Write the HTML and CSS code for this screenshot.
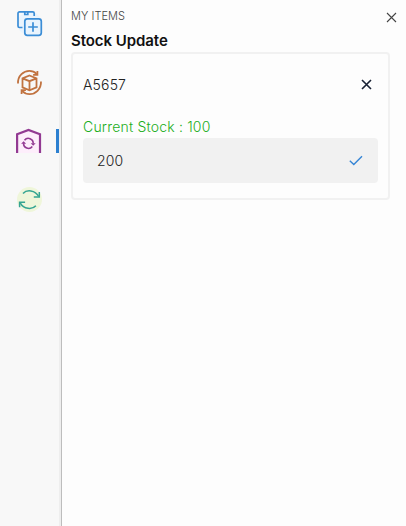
FILE: index.html
```html
<!DOCTYPE html>
<html lang="en">
<head>
<meta charset="utf-8">
<title>My Items</title>
<link rel="stylesheet" href="styles.css">
</head>
<body>
<div class="app">
  <nav class="sidebar">
    <a class="nav-item"><svg width="28" height="28" viewBox="0 0 28 28" fill="none" stroke="#3b8dd6" stroke-width="1.700">
      <circle cx="14.500" cy="14.500" r="12" fill="#eaf4fd" stroke="none"/>
      <path d="M7.500 18.500H4.500a1.500 1.500 0 0 1-1.500-1.500V4.300a1.500 1.500 0 0 1 1.500-1.500h13.200a1.500 1.500 0 0 1 1.500 1.500v2.700M9.800 3v2.500h3V3"/>
      <rect x="9.800" y="9.800" width="16.500" height="16.500" rx="2.500" fill="#eaf4fd"/>
      <path d="M18 13.200v9.600M13.200 18h9.600"/></svg></a>
    <a class="nav-item"><svg width="28" height="28" viewBox="0 0 28 28" fill="none" stroke="#c17340" stroke-width="1.800">
      <path d="M14.500 7.500l7 2.800v9l-7 3-7-3v-9zM7.500 10.300l7 2.900 7-2.900M14.500 13.200v9.100"/>
      <path d="M3 15.500C2.700 7.500 8.800 2.900 14.400 2.900c3 0 5.300 1 7.300 3M26 13.500c.3 8-5.800 12.600-11.400 12.600-3 0-5.300-1-7.300-3"/>
      <path d="M22.400 2.900v3.900h-4.300M6.600 26.100v-3.900h4.300"/></svg></a>
    <a class="nav-item active"><svg width="28" height="28" viewBox="0 0 28 28" fill="none" stroke="#923a92" stroke-width="2.200">
      <path d="M2.500 26V7.800L13.500 3 25 7.800V26" fill="#fdeefb" stroke="none"/>
      <path d="M2.100 26V7.300L13.500 3 25 7.300V26"/>
      <g stroke-width="1.600"><path d="M9.500 13.200a4.900 4.900 0 0 1 8.700 3.300M17.300 19.600a4.900 4.900 0 0 1-8.700-3.300"/></g>
      <path d="M15.700 16.200h5l-2.500 2.500zM6.100 16.700h5l-2.500-2.500z" fill="#923a92" stroke="none"/></svg></a>
    <a class="nav-item"><svg width="28" height="28" viewBox="0 0 28 28" fill="none" stroke="#35a592" stroke-width="1.500">
      <circle cx="14.500" cy="13.500" r="12.500" fill="#eff6da" stroke="none"/>
      <path d="M8 7.500c3.600-4.100 12.200-3.700 15.700 3M20.900 19.800c-3.600 4.100-12.200 3.700-15.700-3"/>
      <path d="M24.300 6v5h-5.500M4.600 21.300v-5h5.500"/></svg></a>
  </nav>
  <main class="panel">
    <header class="panel-header">
      <span>MY ITEMS</span>
      <svg width="11" height="11" viewBox="0 0 11 11"><path d="M1 1l9 9M10 1l-9 9" stroke="#444" stroke-width="1.100"/></svg>
    </header>
    <h1 class="title">Stock Update</h1>
    <section class="card">
      <div class="item-row">
        <span>A5657</span>
        <svg width="11" height="11" viewBox="0 0 11 11"><path d="M1 1l9 9M10 1l-9 9" stroke="#172033" stroke-width="1.600"/></svg>
      </div>
      <div class="stock">Current Stock : 100</div>
      <div class="field">
        <span>200</span>
        <svg width="14" height="11" viewBox="0 0 14 11" fill="none"><path d="M.8 5.800l4 3.700L13 1.200" stroke="#3585d5" stroke-width="1.400"/></svg>
      </div>
    </section>
  </main>
</div>
</body>
</html>
```
FILE: styles.css
```css
* { box-sizing: border-box; }
body { margin: 0; font-family: Inter, "Liberation Sans", sans-serif; background: #fdfdfd; }
svg { display: block; }
.app { display: flex; height: 526px; }
.sidebar {
  width: 62px;
  flex: none;
  display: flex;
  flex-direction: column;
  gap: 31px;
  padding-top: 9px;
  background: linear-gradient(to right, #f8f8f8 59px, #eee 59px, #eee 61px, #bdbdbd 61px);
}
.nav-item { height: 28px; width: 59px; padding-left: 15px; }
.nav-item.active { height: 24px; margin: 2px 0; border-right: 3px solid #2c80d0; }
.nav-item.active svg { margin-top: -2px; }
.panel { flex: 1; padding: 9px 16px 0 9px; }
.panel-header {
  display: flex;
  justify-content: space-between;
  height: 14px;
  font-size: 11px;
  line-height: 14px;
  font-weight: 300;
  letter-spacing: .05px;
  color: #444;
}
.panel-header svg { margin: 3px -7px 0 0; }
.title { margin: 8px 0 0; font-size: 15px; line-height: 20px; font-weight: 600; color: #111; letter-spacing: -.06px; }
.card {
  height: 148px;
  margin-top: 1px;
  padding: 21px 10px 0;
  border: 2px solid #f1f1f1;
  border-radius: 4px;
}
.item-row, .field { display: flex; align-items: center; justify-content: space-between; font-size: 14px; font-weight: 300; letter-spacing: .16px; color: #222; }
.item-row { height: 18px; padding-right: 6px; }
.stock { margin-top: 24px; height: 21px; font-size: 14px; line-height: 20px; font-weight: 300; letter-spacing: .19px; color: #1cae1c; }
.field { height: 45px; padding: 0 15px 0 14px; background: #f1f1f1; border-radius: 4px; }
```
